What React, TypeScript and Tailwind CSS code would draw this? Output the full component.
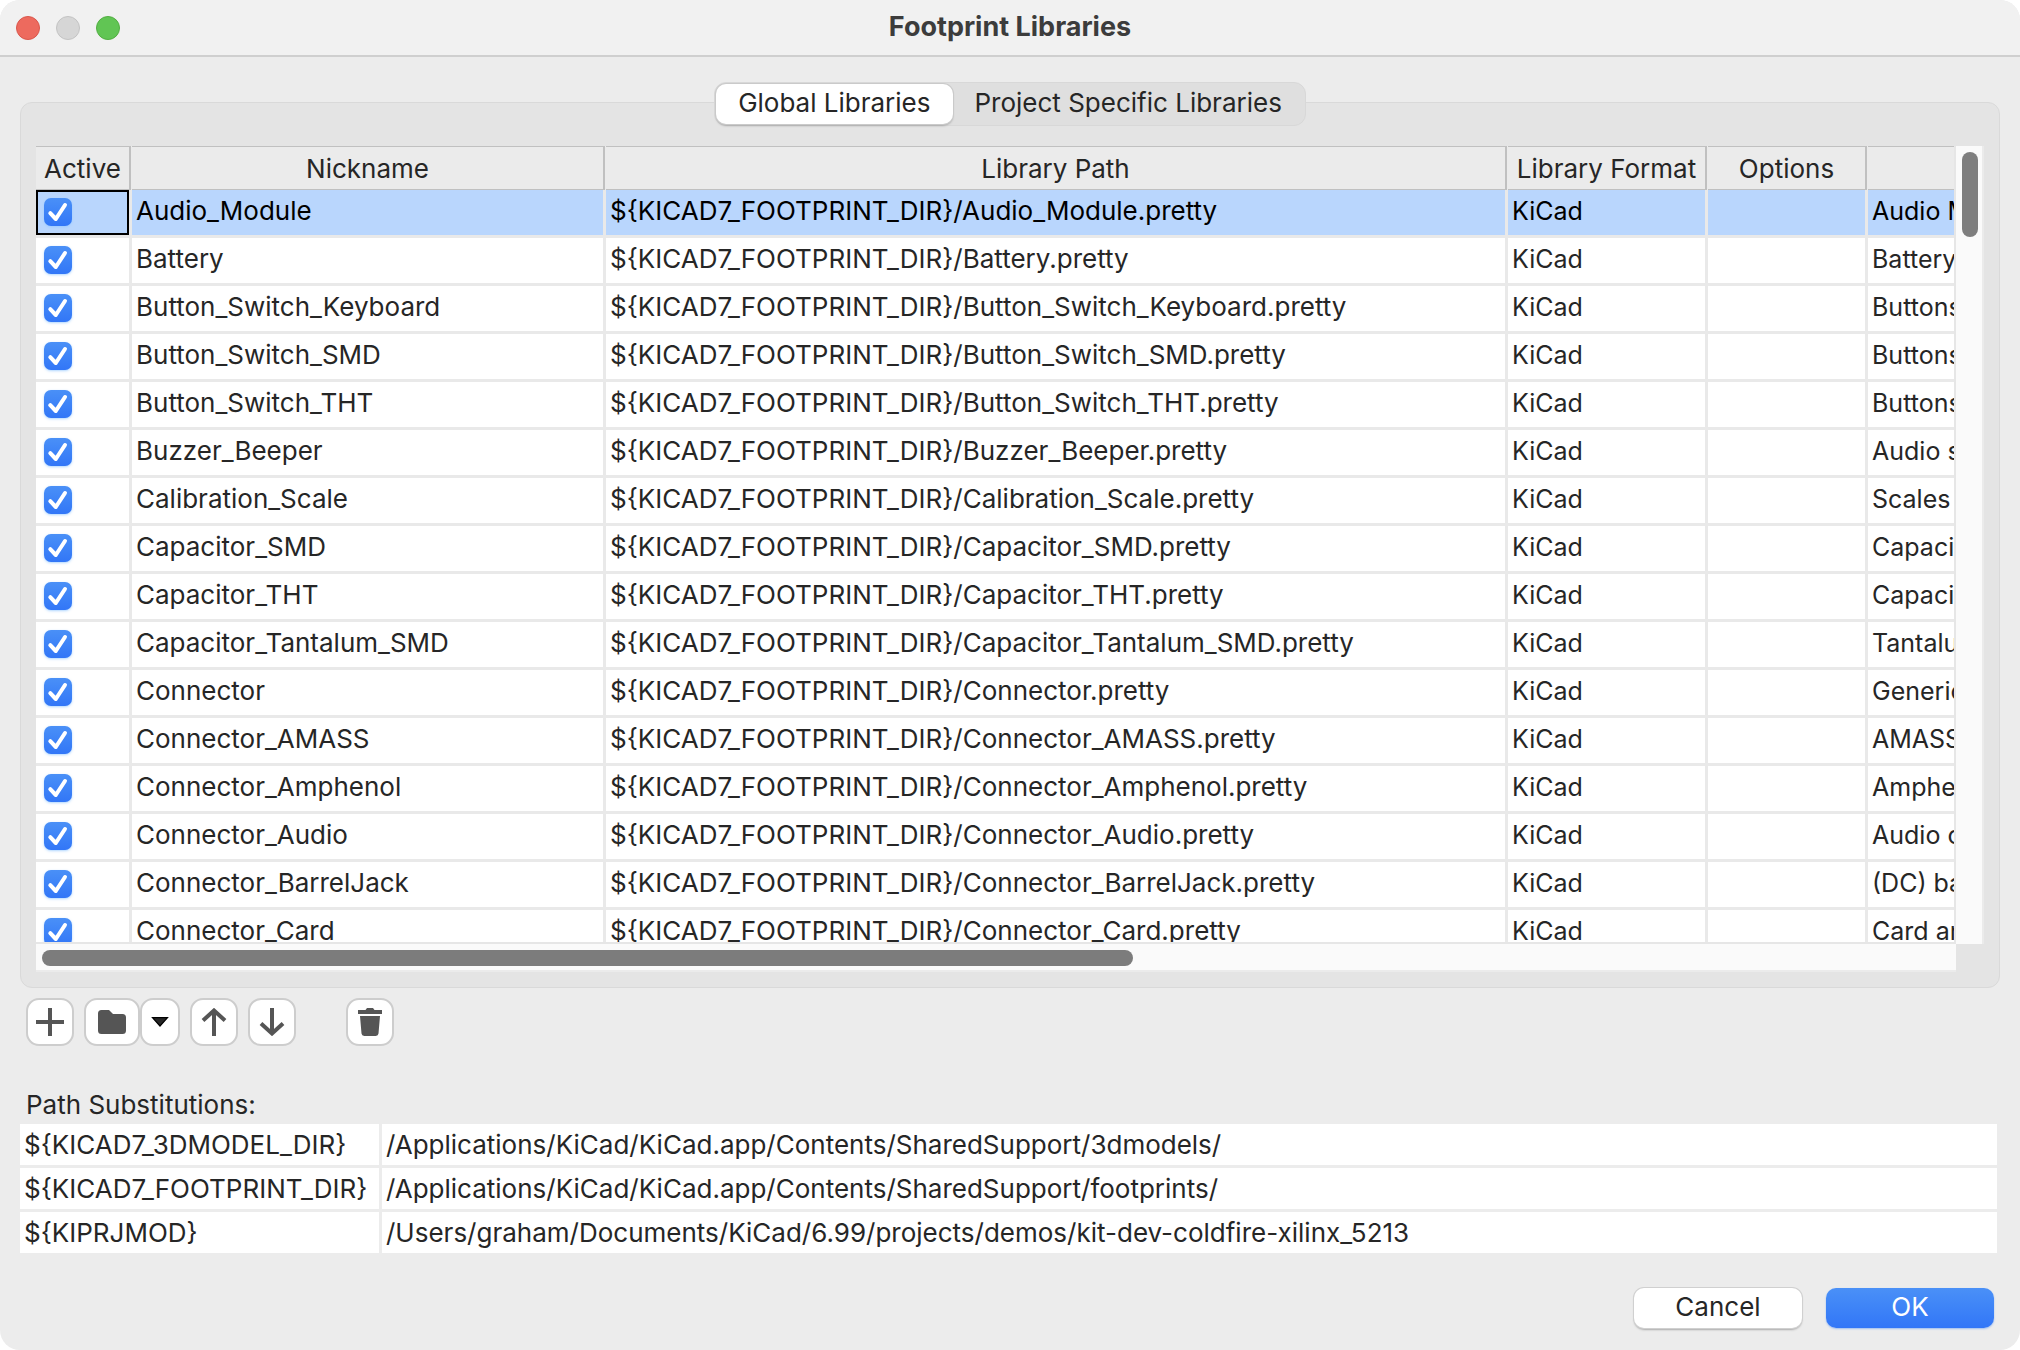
import { useState } from "react";

type Library = { name: string; description: string };

const libraries: Library[] = [
  { name: "Audio_Module", description: "Audio Module" },
  { name: "Battery", description: "Battery and" },
  { name: "Button_Switch_Keyboard", description: "Buttons and" },
  { name: "Button_Switch_SMD", description: "Buttons and" },
  { name: "Button_Switch_THT", description: "Buttons and" },
  { name: "Buzzer_Beeper", description: "Audio signalling" },
  { name: "Calibration_Scale", description: "Scales and" },
  { name: "Capacitor_SMD", description: "Capacitor" },
  { name: "Capacitor_THT", description: "Capacitor" },
  { name: "Capacitor_Tantalum_SMD", description: "Tantalum" },
  { name: "Connector", description: "Generic" },
  { name: "Connector_AMASS", description: "AMASS" },
  { name: "Connector_Amphenol", description: "Amphenol" },
  { name: "Connector_Audio", description: "Audio connector" },
  { name: "Connector_BarrelJack", description: "(DC) barrel" },
  { name: "Connector_Card", description: "Card and" },
];

const substitutions = [
  ["${KICAD7_3DMODEL_DIR}", "/Applications/KiCad/KiCad.app/Contents/SharedSupport/3dmodels/"],
  ["${KICAD7_FOOTPRINT_DIR}", "/Applications/KiCad/KiCad.app/Contents/SharedSupport/footprints/"],
  ["${KIPRJMOD}", "/Users/graham/Documents/KiCad/6.99/projects/demos/kit-dev-coldfire-xilinx_5213"],
];

function Checkbox({ label }: { label: string }) {
  return (
    <label className="ml-2 grid size-7">
      <input
        type="checkbox"
        defaultChecked
        aria-label={label}
        className="peer col-start-1 row-start-1 size-7 appearance-none rounded-[7px] bg-white shadow-sm shadow-blue-300/60 checked:bg-linear-to-b checked:from-[#4a90f7] checked:to-[#3276f7]"
      />
      <svg
        viewBox="0 0 28 28"
        className="pointer-events-none col-start-1 row-start-1 size-7 opacity-0 peer-checked:opacity-100"
        fill="none"
        stroke="#fff"
        strokeWidth="4"
        strokeLinecap="round"
        strokeLinejoin="round"
      >
        <path d="M6.300 15.200 11.800 21 21 7" />
      </svg>
    </label>
  );
}

function HeaderCell({ children, width }: { children?: string; width: string }) {
  return (
    <th scope="col" className={`${width} sticky top-0 z-10 bg-[#ebebeb] p-0 font-normal`}>
      <div className="mr-px h-11 overflow-hidden border-y border-r-2 border-[#c0c0c0] leading-[43px] whitespace-nowrap">
        {children}
      </div>
    </th>
  );
}

function LibraryRow({ lib, selected, onSelect }: { lib: Library; selected: boolean; onSelect: () => void }) {
  const cell =
    "overflow-hidden border-r-3 border-b-3 border-[#e9e9e9] px-1 pt-0 pb-[3px] leading-[42px] whitespace-nowrap";
  return (
    <tr onClick={onSelect} className={selected ? "bg-[#b9d6fd] text-black" : "bg-white"}>
      <td
        className={`h-12 border-r-3 border-b-3 border-[#e9e9e9] p-0 pb-px ${selected ? "shadow-[inset_0_0_0_2px_#000]" : ""}`}
      >
        <Checkbox label={`Activate ${lib.name}`} />
      </td>
      <td className={cell}>{lib.name}</td>
      <td className={cell}>{"${KICAD7_FOOTPRINT_DIR}/" + lib.name + ".pretty"}</td>
      <td className={`${cell} text-[25px]`}>KiCad</td>
      <td className={cell} />
      <td className="overflow-hidden border-b-3 border-[#e9e9e9] px-1 pt-0 pb-[3px] text-[25px] leading-[42px] text-clip whitespace-nowrap">
        {lib.description}
      </td>
    </tr>
  );
}

const toolButton =
  "flex h-12 items-center justify-center rounded-[13px] border-2 border-[#cdcdcd] bg-white text-[#555]";

export default function App() {
  const [selected, setSelected] = useState(0);
  const [tab, setTab] = useState(0);

  return (
    <div className="h-screen bg-white">
      <div className="flex h-full flex-col overflow-hidden rounded-[20px] bg-[#ececec] font-[Inter,sans-serif] text-[26px] text-[#262626]">
        <header className="grid h-[57px] shrink-0 grid-cols-[1fr_auto_1fr] items-center border-b-2 border-[#cfcfcf] bg-[#f1f1f1]">
          <div className="flex gap-4 pl-4">
            <button aria-label="Close" className="size-6 rounded-full border border-[#d9574c] bg-[#ed6a5e]" />
            <button aria-label="Minimize" className="size-6 rounded-full border border-[#c3c3c3] bg-[#d6d6d6]" />
            <button aria-label="Zoom" className="size-6 rounded-full border border-[#52ae42] bg-[#61c554]" />
          </div>
          <h1 className="pb-0.5 text-[27px] leading-8 font-bold text-[#3c3c3c]">Footprint Libraries</h1>
        </header>

        <main className="flex min-h-0 flex-1 flex-col pt-[25px]">
          <div className="relative z-20 -mb-6 flex h-11 self-center rounded-xl border border-[#d8d8d8] bg-[#dfdfdf] p-px leading-9">
            {["Global Libraries", "Project Specific Libraries"].map((name, i) => (
              <button
                key={name}
                onClick={() => setTab(i)}
                className={`rounded-[10px] px-[22px] pb-0.5 ${tab === i ? "bg-white shadow-[0_0_0_1px_#cacaca,0_2px_2px_#aaa]" : ""}`}
              >
                {name}
              </button>
            ))}
          </div>

          <section className="mx-5 flex min-h-0 flex-1 flex-col rounded-xl border border-[#d9d9d9] bg-[#e4e4e4] px-[15px] pt-[43px] pb-[15px]">
            <div className="grid min-h-0 flex-1 grid-cols-[minmax(0,1fr)_28px] grid-rows-[minmax(0,1fr)_28px]">
              <div className="overflow-auto border-r-2 border-b-2 border-[#e6e6e6] bg-white [scrollbar-width:none]">
                <table className="w-full table-fixed border-separate border-spacing-0">
                  <thead>
                    <tr>
                      <HeaderCell width="w-24">Active</HeaderCell>
                      <HeaderCell width="w-[474px]">Nickname</HeaderCell>
                      <HeaderCell width="w-auto">Library Path</HeaderCell>
                      <HeaderCell width="w-[200px]">Library Format</HeaderCell>
                      <HeaderCell width="w-[160px]">Options</HeaderCell>
                      <th className="sticky top-0 z-10 w-[86px] border-y border-[#c0c0c0] bg-[#ebebeb]" />
                    </tr>
                  </thead>
                  <tbody>
                    {libraries.map((lib, i) => (
                      <LibraryRow key={lib.name} lib={lib} selected={selected === i} onSelect={() => setSelected(i)} />
                    ))}
                  </tbody>
                </table>
              </div>
              <div className="border-r-2 border-[#ebebeb] bg-[#fafafa] pt-1.5 pl-1.5">
                <div className="h-[85px] w-4 rounded-full bg-[#7e7e7e]" />
              </div>
              <div className="border-b-2 border-[#ebebeb] bg-[#fafafa] pt-1.5 pl-1.5">
                <div className="h-4 w-[1091px] max-w-full rounded-full bg-[#7c7c7c]" />
              </div>
            </div>
          </section>

          <div className="mt-2.5 flex pl-[26px]">
            <button aria-label="Add library" className={`${toolButton} w-12`}>
              <svg width="28" height="28" viewBox="0 0 28 28" fill="none" stroke="currentColor" strokeWidth="4">
                <path d="M14 0v28M0 14h28" />
              </svg>
            </button>
            <button aria-label="Browse for library" className={`${toolButton} ml-2.5 w-14`}>
              <svg width="28" height="24" viewBox="0 0 28 24" fill="currentColor">
                <path d="M3.500 0H11l4 4h9.500A3.500 3.500 0 0 1 28 7.500v13a3.500 3.500 0 0 1-3.500 3.500h-21A3.500 3.500 0 0 1 0 20.500v-17A3.500 3.500 0 0 1 3.500 0Z" />
              </svg>
            </button>
            <button aria-label="Library types" className={`${toolButton} w-10`}>
              <svg width="18" height="10" viewBox="0 0 18 10">
                <path d="M1.500 .7h15L9 9Z" fill="#262626" stroke="#000" strokeWidth="1.200" />
              </svg>
            </button>
            <button aria-label="Move up" className={`${toolButton} ml-2.5 w-12`}>
              <svg width="26" height="28" viewBox="0 0 26 28" fill="none" stroke="currentColor" strokeWidth="4">
                <path d="M13 28V2M2 12.500 13 2.500 24 12.500" />
              </svg>
            </button>
            <button aria-label="Move down" className={`${toolButton} ml-2.5 w-12`}>
              <svg width="26" height="28" viewBox="0 0 26 28" fill="none" stroke="currentColor" strokeWidth="4">
                <path d="M13 0v26M2 15.500l11 10 11-10" />
              </svg>
            </button>
            <button aria-label="Remove library" className={`${toolButton} ml-[50px] w-12`}>
              <svg width="24" height="28" viewBox="0 0 24 28" fill="currentColor">
                <path d="M0 2h7.500L9 0h6l1.500 2H24v4H0ZM2 8h20l-1.500 17.500A2.800 2.800 0 0 1 17.700 28H6.300a2.800 2.800 0 0 1-2.800-2.500Z" />
              </svg>
            </button>
          </div>

          <h2 className="mt-[43px] mb-[3px] pl-[26px] leading-8">Path Substitutions:</h2>
          <div className="mr-[23px] ml-5">
            <table className="w-full table-fixed border-separate border-spacing-0" aria-label="Path substitutions">
              <tbody>
                {substitutions.map(([name, path]) => (
                  <tr key={name} className="bg-white leading-[41px] whitespace-nowrap">
                    <th
                      scope="row"
                      className="w-[362px] border-r-3 border-b-3 border-[#ececec] px-1 py-0 text-left font-normal"
                    >
                      {name}
                    </th>
                    <td className="border-b-3 border-[#ececec] px-1 py-0">{path}</td>
                  </tr>
                ))}
              </tbody>
            </table>
          </div>
        </main>

        <footer className="flex justify-end gap-6 pt-8 pr-[26px] pb-[22px] leading-9">
          <button className="h-10 w-[168px] rounded-[10px] bg-white pb-0.5 shadow-[0_0_0_1px_#d0d0d0,0_2px_2px_#aaa]">
            Cancel
          </button>
          <button className="h-10 w-[168px] rounded-[10px] bg-linear-to-b from-[#4a90f7] to-[#3276f7] pb-0.5 text-white shadow-[0_1px_2px_#9dbdf0]">
            OK
          </button>
        </footer>
      </div>
    </div>
  );
}
